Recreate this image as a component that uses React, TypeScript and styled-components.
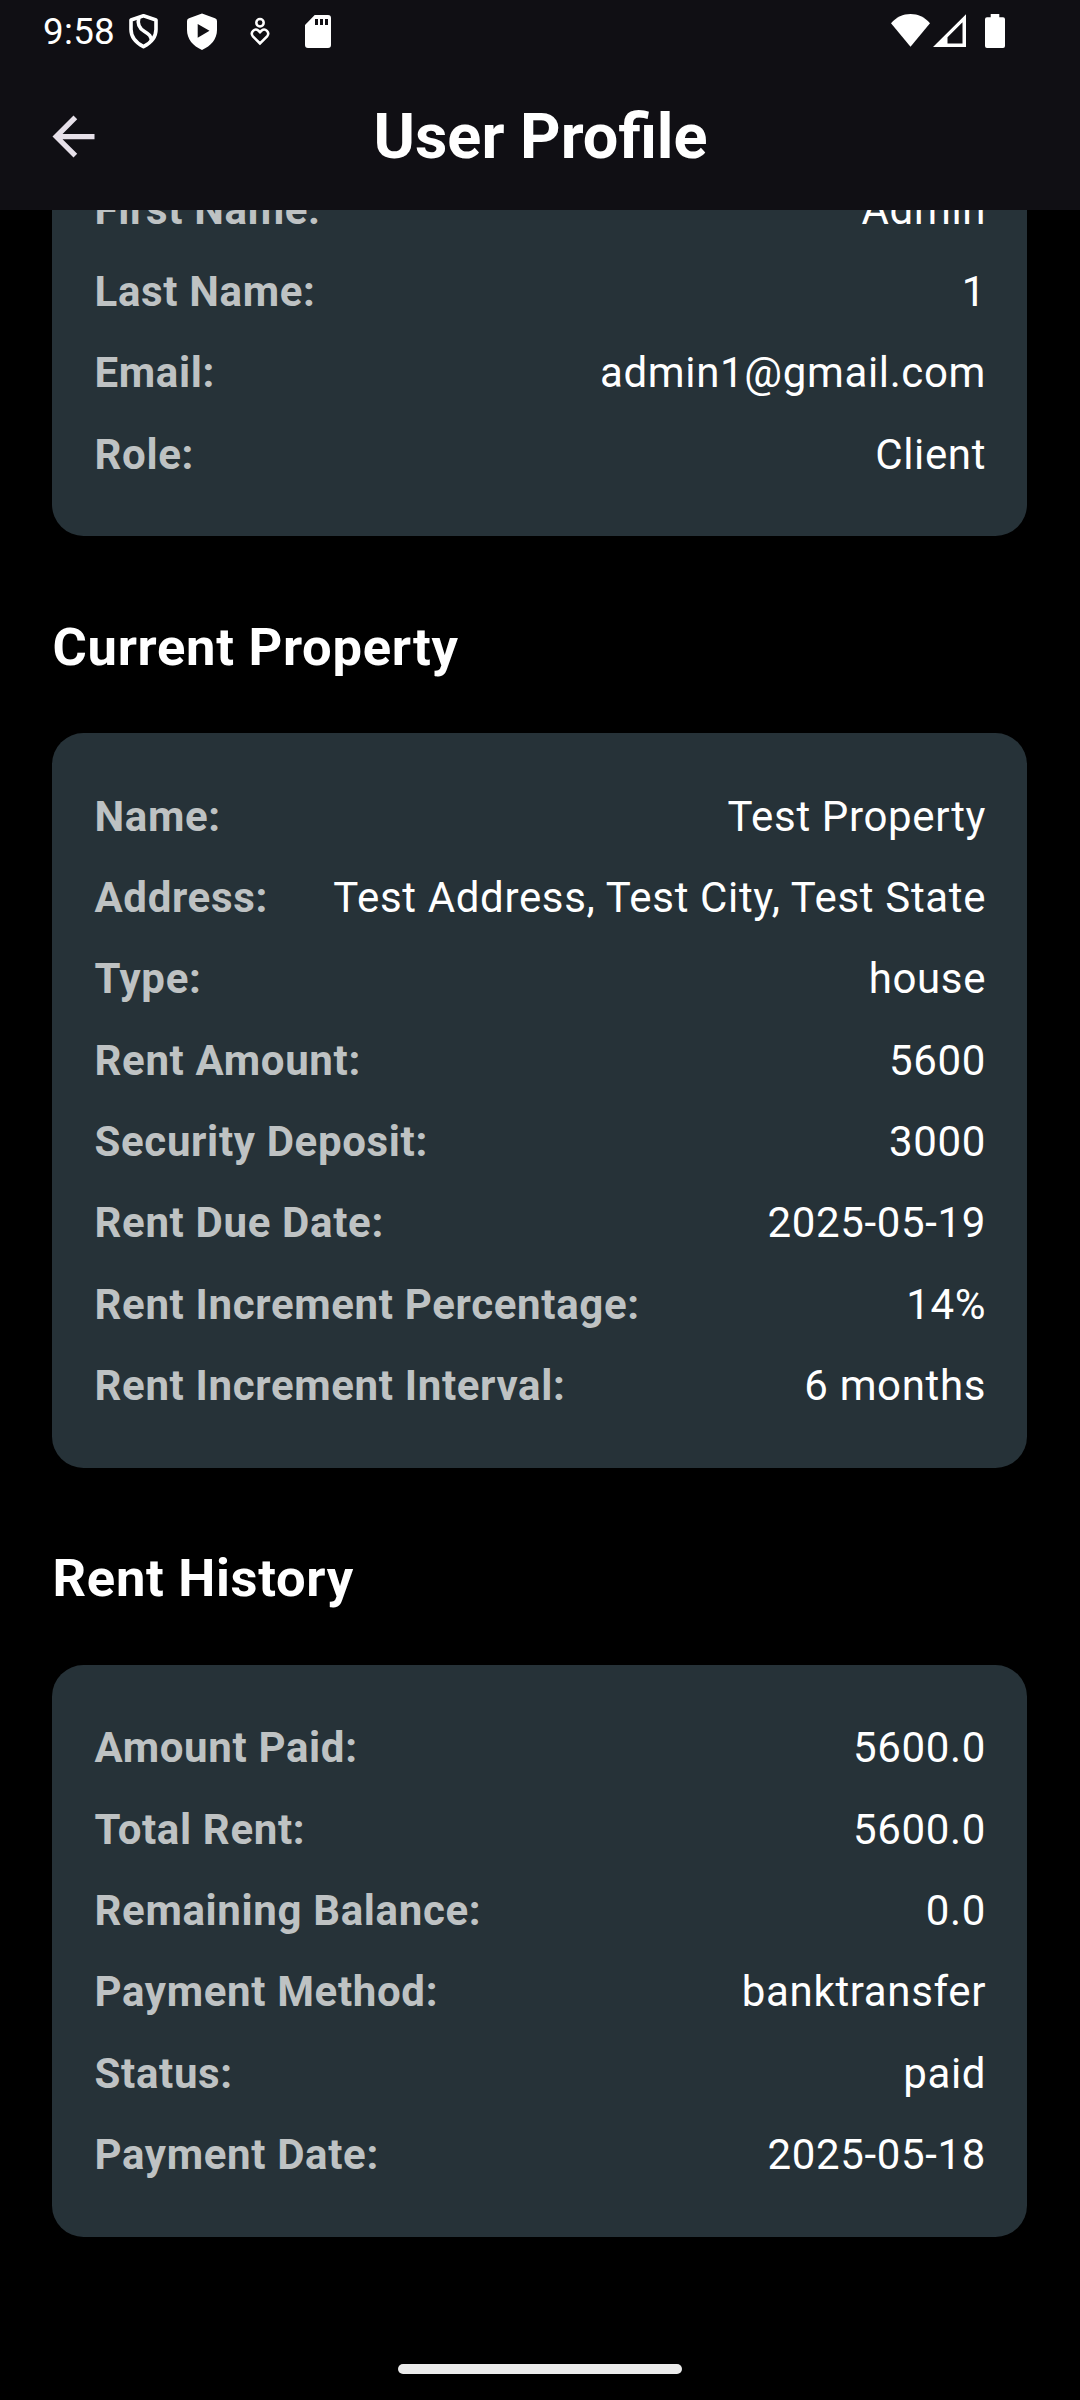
import React from "react";
import styled, { createGlobalStyle } from "styled-components";

const GlobalStyle = createGlobalStyle`
  * { box-sizing: border-box; }
  body { margin: 0; background: #000; }
`;

const Screen = styled.div`
  display: flex;
  flex-direction: column;
  width: 1080px;
  height: 2400px;
  overflow: hidden;
  background: #000;
  color: #fff;
  font-family: Roboto, "Noto Sans", sans-serif;
`;

const Header = styled.header`
  flex: none;
  display: flex;
  flex-direction: column;
  height: 210px;
  background: #100f14;
`;

const StatusBar = styled.div`
  display: flex;
  justify-content: space-between;
  height: 63px;
  padding: 12px 75px 0 43px;
`;

const StatusGroup = styled.div<{ $gap: number }>`
  display: flex;
  align-items: flex-start;
  gap: ${(p) => p.$gap}px;
  height: 40px;
`;

const Clock = styled.span`
  width: 61px;
  font-size: 36.75px;
  line-height: 40px;
  letter-spacing: 0.3px;
  white-space: nowrap;
`;

const StatusIcon = styled.svg`
  flex: none;
  display: block;
  height: 40px;
`;

const AppBar = styled.div`
  display: grid;
  grid-template-columns: 147px 1fr 147px;
  align-items: center;
  height: 147px;
`;

const BackButton = styled.button`
  display: flex;
  align-items: center;
  justify-content: center;
  width: 126px;
  height: 126px;
  margin-left: 10.5px;
  padding: 0;
  border: 0;
  background: none;
  color: #e6e0e9;
`;

const Title = styled.h1`
  margin: 0;
  padding-left: 1px;
  font-size: 63px;
  line-height: 84px;
  font-weight: 700;
  text-align: center;
`;

const Content = styled.main`
  flex: 1;
  min-height: 0;
  display: flex;
  flex-direction: column;
  justify-content: flex-end;
  overflow: hidden;
  padding: 0 53px 107px 52px;
`;

const SectionTitle = styled.h2`
  flex: none;
  margin: 74.25px 0 49px;
  padding-left: 0.5px;
  font-size: 52.5px;
  line-height: 73.5px;
  font-weight: 700;
  letter-spacing: 0.7px;
`;

const Card = styled.section`
  flex: none;
  padding: 42.4px 40.9px 41.6px 42.5px;
  border-radius: 31.5px;
  background: #263238;
`;

const Row = styled.div`
  display: flex;
  justify-content: space-between;
  padding: 9.1875px 0;
  font-size: 42px;
  line-height: 63px;
  letter-spacing: 0.656px;
  white-space: nowrap;
`;

const Label = styled.span`
  font-weight: 700;
  color: #bec2c3;
`;

const Value = styled.span`
  font-weight: 400;
`;

const NavigationArea = styled.footer`
  flex: none;
  display: flex;
  justify-content: center;
  height: 56px;
  padding-top: 20px;
`;

const HomeHandle = styled.div`
  width: 284px;
  height: 10px;
  border-radius: 5px;
  background: #ebebeb;
`;

type Entry = [label: string, value: string];

const profile: Entry[] = [
  ["First Name:", "Admin"],
  ["Last Name:", "1"],
  ["Email:", "admin1@gmail.com"],
  ["Role:", "Client"],
];

const property: Entry[] = [
  ["Name:", "Test Property"],
  ["Address:", "Test Address, Test City, Test State"],
  ["Type:", "house"],
  ["Rent Amount:", "5600"],
  ["Security Deposit:", "3000"],
  ["Rent Due Date:", "2025-05-19"],
  ["Rent Increment Percentage:", "14%"],
  ["Rent Increment Interval:", "6 months"],
];

const history: Entry[] = [
  ["Amount Paid:", "5600.0"],
  ["Total Rent:", "5600.0"],
  ["Remaining Balance:", "0.0"],
  ["Payment Method:", "banktransfer"],
  ["Status:", "paid"],
  ["Payment Date:", "2025-05-18"],
];

function DetailCard({ entries }: { entries: Entry[] }) {
  return (
    <Card>
      {entries.map(([label, value]) => (
        <Row key={label}>
          <Label>{label}</Label>
          <Value>{value}</Value>
        </Row>
      ))}
    </Card>
  );
}

const ShieldIcon = () => (
  <StatusIcon width="30" viewBox="0 0 30 40" fill="none" stroke="#fff" strokeWidth="3.6" strokeLinejoin="round">
    <path d="M14.500 3.800 27 8v9.500c0 7.500-4.500 13-12.500 17.200C6.500 30.500 2 25 2 17.500V8Z" />
    <path d="M9.900 5.400C8 12 10.500 16.500 15.500 19.500c4.500 2.700 7 4.500 6.800 10" />
  </StatusIcon>
);

const PlayShieldIcon = () => (
  <StatusIcon width="30" viewBox="0 0 30 40" fill="#fff" fillRule="evenodd">
    <path d="M15 1.500 28 6.200q2 .7 2 2.800v9c0 9-6 16-15 20C6 34 0 27 0 18V9q0-2.100 2-2.800ZM10.700 12v13.700L22.500 18.800Z" />
  </StatusIcon>
);

const WellbeingIcon = () => (
  <StatusIcon width="20" viewBox="0 0 20 40" fill="none" stroke="#fff" strokeWidth="2.500">
    <circle cx="10" cy="10.700" r="3.700" />
    <path d="M10 31.500 2.700 24.100a4 4 0 0 1 5.600-5.600L10 20.200l1.700-1.700a4 4 0 0 1 5.600 5.600Z" />
  </StatusIcon>
);

const SdCardIcon = () => (
  <StatusIcon width="26" viewBox="0 0 26 40" fill="#fff" fillRule="evenodd">
    <path d="M9.700 3H23q3 0 3 3v27q0 3-3 3H3q-3 0-3-3V13ZM10 7v6h3V7Zm5 0v6h3V7Zm5 0v6h3V7Z" />
  </StatusIcon>
);

const WifiIcon = () => (
  <StatusIcon width="39" viewBox="0 0 39 40" fill="#fff">
    <path d="M0 11.300C5.500 5 12 2 19.500 2S33.500 5 39 11.300L19.500 34.700Z" />
  </StatusIcon>
);

const SignalIcon = () => (
  <StatusIcon width="33" viewBox="0 0 33 40" fill="#fff" fillRule="evenodd">
    <path d="M33 2.200V35H0ZM29.500 10.300 14.500 25.200V31.500H29.500Z" />
  </StatusIcon>
);

const BatteryIcon = () => (
  <StatusIcon width="20" viewBox="0 0 20 40" fill="#fff">
    <path d="M5.700 2h8.600v3.300H18q2 0 2 2V34q0 2-2 2H2q-2 0-2-2V7.300q0-2 2-2h3.700Z" />
  </StatusIcon>
);

const SignalGroup = styled.div`
  display: flex;
  gap: 3px;
`;

const NotificationIcons = styled.div`
  display: flex;
  gap: 28px;
`;

const Spaced = styled.div<{ $left: number }>`
  margin-left: ${(p) => p.$left}px;
`;

export default function App() {
  return (
    <Screen>
      <GlobalStyle />
      <Header>
        <StatusBar>
          <StatusGroup $gap={25}>
            <Clock>9:58</Clock>
            <NotificationIcons>
              <ShieldIcon />
              <PlayShieldIcon />
              <Spaced $left={5}>
                <WellbeingIcon />
              </Spaced>
              <Spaced $left={7}>
                <SdCardIcon />
              </Spaced>
            </NotificationIcons>
          </StatusGroup>
          <StatusGroup $gap={19}>
            <SignalGroup>
              <WifiIcon />
              <SignalIcon />
            </SignalGroup>
            <BatteryIcon />
          </StatusGroup>
        </StatusBar>
        <AppBar>
          <BackButton aria-label="Back">
            <svg width="63" height="63" viewBox="0 0 24 24" fill="currentColor">
              <path d="M20 11H7.830l5.590-5.590L12 4l-8 8 8 8 1.410-1.410L7.830 13H20v-2z" />
            </svg>
          </BackButton>
          <Title>User Profile</Title>
        </AppBar>
      </Header>
      <Content>
        <DetailCard entries={profile} />
        <SectionTitle>Current Property</SectionTitle>
        <DetailCard entries={property} />
        <SectionTitle>Rent History</SectionTitle>
        <DetailCard entries={history} />
      </Content>
      <NavigationArea>
        <HomeHandle />
      </NavigationArea>
    </Screen>
  );
}
